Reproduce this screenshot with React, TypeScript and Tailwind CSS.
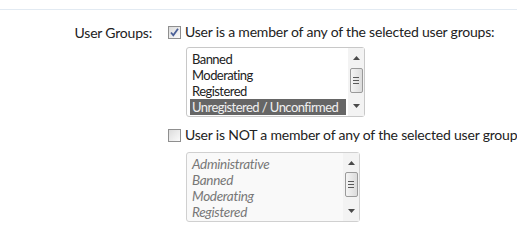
import React from "react";

function Check({ checked }: { checked: boolean }) {
  return (
    <span className="relative inline-block w-[13px] h-[13px] shrink-0 border border-[#8f8f8f] bg-gradient-to-br from-[#dcdcdc] to-[#fbfbfb]">
      {checked && (
        <svg viewBox="0 0 11 11" className="absolute left-0 top-0 w-[11px] h-[11px]">
          <path d="M2 5.5 L4.3 8.3 L9 1.8" fill="none" stroke="#4a5f97" strokeWidth="1.8" />
        </svg>
      )}
    </span>
  );
}

function Scroll({ thumbTop }: { thumbTop: number }) {
  return (
    <div className="w-[16px] shrink-0 self-stretch flex flex-col items-center bg-[#f3f3f3] py-[1px]">
      <svg viewBox="0 0 7 4" className="w-[7px] h-[4px] mt-[7px]">
        <path d="M0 4 L3.5 0 L7 4 Z" fill="#4a4a4a" />
      </svg>
      <div
        className="w-[13px] h-[25px] border border-[#9a9a9a] rounded-[2px] bg-gradient-to-r from-[#f4f4f4] to-[#dcdcdc] flex flex-col items-center justify-center gap-[2px]"
        style={{ marginTop: thumbTop }}
      >
        <span className="block w-[6px] h-px bg-[#5a5a5a]" />
        <span className="block w-[6px] h-px bg-[#5a5a5a]" />
        <span className="block w-[6px] h-px bg-[#5a5a5a]" />
      </div>
      <div className="flex-1" />
      <svg viewBox="0 0 7 4" className="w-[7px] h-[4px] mb-[7px]">
        <path d="M0 0 L3.5 4 L7 0 Z" fill="#4a4a4a" />
      </svg>
    </div>
  );
}

export default function App() {
  const font = { fontFamily: "Lato, 'Noto Sans', sans-serif" };
  return (
    <div className="w-[517px] h-[234px] bg-white overflow-hidden text-[14px] tracking-[-0.2px] text-[#222] leading-[16px]" style={font}>
      <div className="h-[9px]" />
      <div className="border-t border-[#e2eaf2]" />
      <div className="flex pt-[14px]">
        <div className="w-[152px] shrink-0 text-right whitespace-nowrap pt-[1px]">User Groups:</div>
        <div className="ml-[16px] shrink-0 flex flex-col">
          <label className="flex items-center gap-[4px] whitespace-nowrap">
            <Check checked />
            <span>User is a member of any of the selected user groups:</span>
          </label>
          <div className="ml-[18px] mt-[7px] w-[179px] h-[70px] border border-[#c8c8c8] rounded-[3px] bg-white flex">
            <div className="flex-1 min-w-0 pl-[3px] pr-[2px] pt-[3px] text-[13px] tracking-[-0.55px]">
              <div className="px-[2px] h-[16px]">Banned</div>
              <div className="px-[2px] h-[16px]">Moderating</div>
              <div className="px-[2px] h-[16px]">Registered</div>
              <div className="px-[2px] h-[16px] bg-[#666666] text-[#f0f0f0] whitespace-nowrap overflow-hidden">Unregistered / Unconfirmed</div>
            </div>
            <Scroll thumbTop={8} />
          </div>
          <label className="flex items-center gap-[4px] whitespace-nowrap mt-[10px]">
            <Check checked={false} />
            <span>User is NOT a member of any of the selected user groups:</span>
          </label>
          <div className="ml-[18px] mt-[9px] w-[174px] h-[70px] border border-[#d0d0d0] rounded-[3px] bg-[#f9f9f9] flex">
            <div className="flex-1 pl-[5px] pt-[3px] italic text-[#777] text-[13.5px] tracking-[-0.3px]">
              <div className="h-[16px]">Administrative</div>
              <div className="h-[16px]">Banned</div>
              <div className="h-[16px]">Moderating</div>
              <div className="h-[16px]">Registered</div>
            </div>
            <Scroll thumbTop={7} />
          </div>
        </div>
      </div>
    </div>
  );
}
